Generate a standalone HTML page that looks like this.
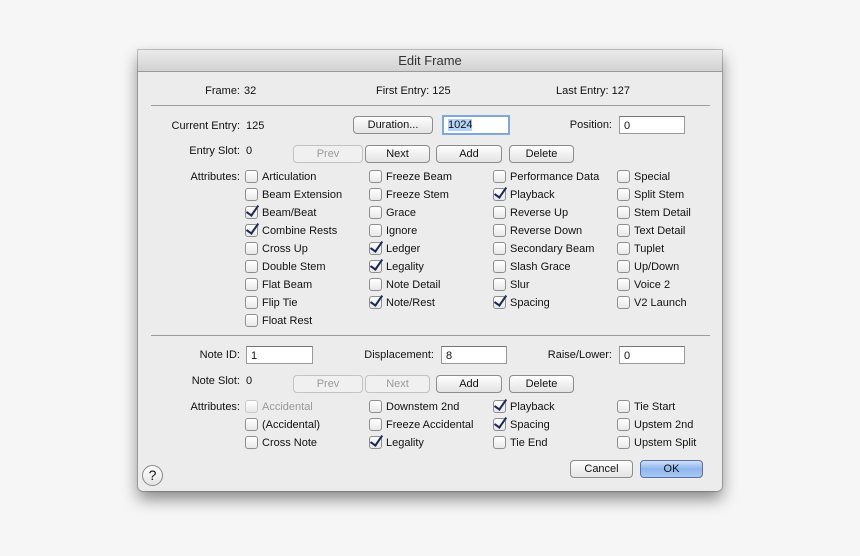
<!DOCTYPE html>
<html><head><meta charset="utf-8"><style>
body{margin:0;width:860px;height:556px;background:#f6f6f6;font-family:"Liberation Sans",sans-serif;font-size:11px;color:#111;position:relative;overflow:hidden}
.dlg{position:absolute;left:138px;top:50px;width:584px;height:441px;background:#ececec;border-radius:0 0 5px 5px;box-shadow:0 8px 16px rgba(0,0,0,.45),0 0 0 1px rgba(0,0,0,.2)}
.tb{position:absolute;left:0;top:0;width:584px;height:21px;background:linear-gradient(#ebebeb,#d2d2d2);border-bottom:1px solid #9a9a9a;text-align:center;font-size:13px;line-height:21px;color:#333}
.a{position:absolute;white-space:nowrap;line-height:15px}
.r{text-align:right}
.sep{position:absolute;left:13px;width:559px;height:1px;background:#9c9c9c}
.btn{position:absolute;height:16px;border:1px solid #8c8c8c;border-radius:4px;background:linear-gradient(#fff,#f0f0f0 50%,#e4e4e4);text-align:center;line-height:16px;font-size:11px}
.dis{color:#9a9a9a;border-color:#c2c2c2;background:#f0f0f0}
.fld{position:absolute;height:16px;background:#fff;border:1px solid #9a9a9a;border-top-color:#777;line-height:19px;padding-left:4px;box-sizing:content-box}
.cb{position:absolute;width:11px;height:11px;border:1px solid #8e8e8e;border-radius:3px;background:linear-gradient(#fff,#e8e8e8)}
.cb.k:after{content:"";position:absolute;left:3px;top:-4px;width:5px;height:11px;border:solid #1b2a5c;border-width:0 2px 2px 0;transform:rotate(35deg)}
.cb.g{border-color:#c8c8c8}
.l{position:absolute;white-space:nowrap;line-height:15px}
</style></head><body>
<div class="dlg">
<div class="tb">Edit Frame</div>
</div>
<div class="a r" style="left:150px;width:90px;top:84px">Frame:</div><div class="a" style="left:244px;top:84px">32</div>
<div class="a" style="left:376px;top:84px">First Entry: 125</div>
<div class="a" style="left:556px;top:84px">Last Entry: 127</div>
<div class="sep" style="left:151px;top:105px"></div>
<div class="a r" style="left:150px;width:90px;top:119px">Current Entry:</div><div class="a" style="left:246px;top:119px">125</div>
<div class="btn" style="left:353px;top:116px;width:78px">Duration...</div>
<div class="fld" style="left:442px;top:115px;width:60px;border:2px solid #7fa7db;height:16px;line-height:17px"><span style="background:#b5d2f7">1024</span></div>
<div class="a r" style="left:540px;width:72px;top:118px">Position:</div>
<div class="fld" style="left:619px;top:116px;width:60px">0</div>
<div class="a r" style="left:150px;width:90px;top:144px">Entry Slot:</div><div class="a" style="left:246px;top:144px">0</div>
<div class="btn dis" style="left:293px;top:145px;width:68px">Prev</div>
<div class="btn" style="left:365px;top:145px;width:63px">Next</div>
<div class="btn" style="left:436px;top:145px;width:64px">Add</div>
<div class="btn" style="left:509px;top:145px;width:63px">Delete</div>
<div class="a r" style="left:150px;width:90px;top:170px">Attributes:</div>

<div class="cb" style="left:245px;top:170px"></div><div class="l" style="left:262px;top:170px">Articulation</div>
<div class="cb" style="left:245px;top:188px"></div><div class="l" style="left:262px;top:188px">Beam Extension</div>
<div class="cb k" style="left:245px;top:206px"></div><div class="l" style="left:262px;top:206px">Beam/Beat</div>
<div class="cb k" style="left:245px;top:224px"></div><div class="l" style="left:262px;top:224px">Combine Rests</div>
<div class="cb" style="left:245px;top:242px"></div><div class="l" style="left:262px;top:242px">Cross Up</div>
<div class="cb" style="left:245px;top:260px"></div><div class="l" style="left:262px;top:260px">Double Stem</div>
<div class="cb" style="left:245px;top:278px"></div><div class="l" style="left:262px;top:278px">Flat Beam</div>
<div class="cb" style="left:245px;top:296px"></div><div class="l" style="left:262px;top:296px">Flip Tie</div>
<div class="cb" style="left:245px;top:314px"></div><div class="l" style="left:262px;top:314px">Float Rest</div>

<div class="cb" style="left:369px;top:170px"></div><div class="l" style="left:386px;top:170px">Freeze Beam</div>
<div class="cb" style="left:369px;top:188px"></div><div class="l" style="left:386px;top:188px">Freeze Stem</div>
<div class="cb" style="left:369px;top:206px"></div><div class="l" style="left:386px;top:206px">Grace</div>
<div class="cb" style="left:369px;top:224px"></div><div class="l" style="left:386px;top:224px">Ignore</div>
<div class="cb k" style="left:369px;top:242px"></div><div class="l" style="left:386px;top:242px">Ledger</div>
<div class="cb k" style="left:369px;top:260px"></div><div class="l" style="left:386px;top:260px">Legality</div>
<div class="cb" style="left:369px;top:278px"></div><div class="l" style="left:386px;top:278px">Note Detail</div>
<div class="cb k" style="left:369px;top:296px"></div><div class="l" style="left:386px;top:296px">Note/Rest</div>

<div class="cb" style="left:493px;top:170px"></div><div class="l" style="left:510px;top:170px">Performance Data</div>
<div class="cb k" style="left:493px;top:188px"></div><div class="l" style="left:510px;top:188px">Playback</div>
<div class="cb" style="left:493px;top:206px"></div><div class="l" style="left:510px;top:206px">Reverse Up</div>
<div class="cb" style="left:493px;top:224px"></div><div class="l" style="left:510px;top:224px">Reverse Down</div>
<div class="cb" style="left:493px;top:242px"></div><div class="l" style="left:510px;top:242px">Secondary Beam</div>
<div class="cb" style="left:493px;top:260px"></div><div class="l" style="left:510px;top:260px">Slash Grace</div>
<div class="cb" style="left:493px;top:278px"></div><div class="l" style="left:510px;top:278px">Slur</div>
<div class="cb k" style="left:493px;top:296px"></div><div class="l" style="left:510px;top:296px">Spacing</div>

<div class="cb" style="left:617px;top:170px"></div><div class="l" style="left:634px;top:170px">Special</div>
<div class="cb" style="left:617px;top:188px"></div><div class="l" style="left:634px;top:188px">Split Stem</div>
<div class="cb" style="left:617px;top:206px"></div><div class="l" style="left:634px;top:206px">Stem Detail</div>
<div class="cb" style="left:617px;top:224px"></div><div class="l" style="left:634px;top:224px">Text Detail</div>
<div class="cb" style="left:617px;top:242px"></div><div class="l" style="left:634px;top:242px">Tuplet</div>
<div class="cb" style="left:617px;top:260px"></div><div class="l" style="left:634px;top:260px">Up/Down</div>
<div class="cb" style="left:617px;top:278px"></div><div class="l" style="left:634px;top:278px">Voice 2</div>
<div class="cb" style="left:617px;top:296px"></div><div class="l" style="left:634px;top:296px">V2 Launch</div>

<div class="sep" style="left:151px;top:335px"></div>
<div class="a r" style="left:150px;width:90px;top:348px">Note ID:</div>
<div class="fld" style="left:246px;top:346px;width:61px">1</div>
<div class="a r" style="left:340px;width:94px;top:348px">Displacement:</div>
<div class="fld" style="left:441px;top:346px;width:60px">8</div>
<div class="a r" style="left:520px;width:92px;top:348px">Raise/Lower:</div>
<div class="fld" style="left:619px;top:346px;width:60px">0</div>
<div class="a r" style="left:150px;width:90px;top:374px">Note Slot:</div><div class="a" style="left:246px;top:374px">0</div>
<div class="btn dis" style="left:293px;top:375px;width:68px">Prev</div>
<div class="btn dis" style="left:365px;top:375px;width:63px">Next</div>
<div class="btn" style="left:436px;top:375px;width:64px">Add</div>
<div class="btn" style="left:509px;top:375px;width:63px">Delete</div>
<div class="a r" style="left:150px;width:90px;top:400px">Attributes:</div>

<div class="cb g" style="left:245px;top:400px"></div><div class="l" style="left:262px;top:400px;color:#999">Accidental</div>
<div class="cb" style="left:245px;top:418px"></div><div class="l" style="left:262px;top:418px">(Accidental)</div>
<div class="cb" style="left:245px;top:436px"></div><div class="l" style="left:262px;top:436px">Cross Note</div>
<div class="cb" style="left:369px;top:400px"></div><div class="l" style="left:386px;top:400px">Downstem 2nd</div>
<div class="cb" style="left:369px;top:418px"></div><div class="l" style="left:386px;top:418px">Freeze Accidental</div>
<div class="cb k" style="left:369px;top:436px"></div><div class="l" style="left:386px;top:436px">Legality</div>
<div class="cb k" style="left:493px;top:400px"></div><div class="l" style="left:510px;top:400px">Playback</div>
<div class="cb k" style="left:493px;top:418px"></div><div class="l" style="left:510px;top:418px">Spacing</div>
<div class="cb" style="left:493px;top:436px"></div><div class="l" style="left:510px;top:436px">Tie End</div>
<div class="cb" style="left:617px;top:400px"></div><div class="l" style="left:634px;top:400px">Tie Start</div>
<div class="cb" style="left:617px;top:418px"></div><div class="l" style="left:634px;top:418px">Upstem 2nd</div>
<div class="cb" style="left:617px;top:436px"></div><div class="l" style="left:634px;top:436px">Upstem Split</div>

<div class="btn" style="left:570px;top:460px;width:61px">Cancel</div>
<div class="btn" style="left:640px;top:460px;width:61px;border-color:#5a6fa8;background:linear-gradient(#cfe0f8,#8fb6ee 50%,#a9c9f4)">OK</div>
<div style="position:absolute;left:142px;top:465px;width:19px;height:19px;border:1px solid #888;border-radius:50%;background:linear-gradient(#fff,#e4e4e4);text-align:center;line-height:19px;font-size:14px">?</div>
</body></html>
